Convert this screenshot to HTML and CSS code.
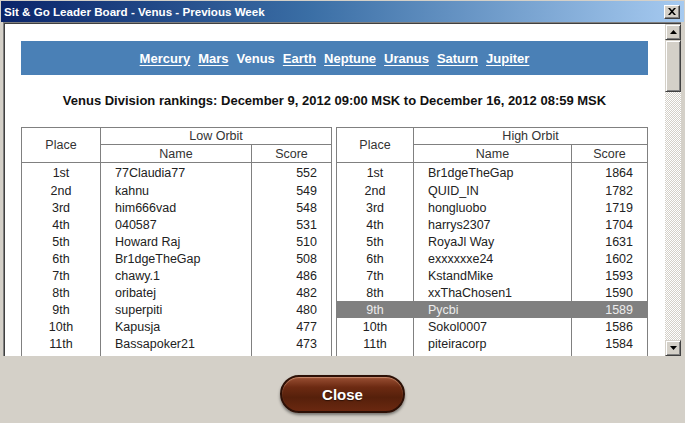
FILE: index.html
```html
<!DOCTYPE html>
<html lang="en">
<head>
  <meta charset="UTF-8">
  <title>Sit &amp; Go Leader Board - Venus - Previous Week</title>
  <link rel="stylesheet" href="styles.css">
</head>
<body>
  <div class="window">
    <div class="titlebar">
      <span class="title">Sit &amp; Go Leader Board - Venus - Previous Week</span>
      <button class="title-close">
        <svg width="8" height="7" viewBox="0 0 8 7"><path d="M0 0h2l2 2.2L6 0h2L5 3.5 8 7H6L4 4.8 2 7H0l3-3.5z" fill="#000"/></svg>
      </button>
    </div>

    <div class="frame">
      <div class="frame-inner">
        <div class="viewport">
          <div class="nav">
            <a href="#">Mercury</a>
            <a href="#">Mars</a>
            <span class="current">Venus</span>
            <a href="#">Earth</a>
            <a href="#">Neptune</a>
            <a href="#">Uranus</a>
            <a href="#">Saturn</a>
            <a href="#">Jupiter</a>
          </div>

          <h1 class="heading">Venus Division rankings: December 9, 2012 09:00 MSK to December 16, 2012 08:59 MSK</h1>

          <div class="boards">
            <table class="board board-low">
              <colgroup><col class="c-place"><col class="c-name"><col class="c-score"></colgroup>
              <thead>
                <tr class="head-top"><th rowspan="2">Place</th><th colspan="2" class="orbit">Low Orbit</th></tr>
                <tr class="head-sub"><th>Name</th><th>Score</th></tr>
              </thead>
              <tbody>
                <tr><td class="place">1st</td><td class="name">77Claudia77</td><td class="score">552</td></tr>
                <tr><td class="place">2nd</td><td class="name">kahnu</td><td class="score">549</td></tr>
                <tr><td class="place">3rd</td><td class="name">him666vad</td><td class="score">548</td></tr>
                <tr><td class="place">4th</td><td class="name">040587</td><td class="score">531</td></tr>
                <tr><td class="place">5th</td><td class="name">Howard Raj</td><td class="score">510</td></tr>
                <tr><td class="place">6th</td><td class="name">Br1dgeTheGap</td><td class="score">508</td></tr>
                <tr><td class="place">7th</td><td class="name">chawy.1</td><td class="score">486</td></tr>
                <tr><td class="place">8th</td><td class="name">oribatej</td><td class="score">482</td></tr>
                <tr><td class="place">9th</td><td class="name">superpiti</td><td class="score">480</td></tr>
                <tr><td class="place">10th</td><td class="name">Kapusja</td><td class="score">477</td></tr>
                <tr><td class="place">11th</td><td class="name">Bassapoker21</td><td class="score">473</td></tr>
                <tr><td class="place">12th</td><td class="name">Simontaj</td><td class="score">470</td></tr>
                <tr><td class="place">13th</td><td class="name">pokerlife</td><td class="score">466</td></tr>
              </tbody>
            </table>

            <table class="board board-high">
              <colgroup><col class="c-place"><col class="c-name"><col class="c-score"></colgroup>
              <thead>
                <tr class="head-top"><th rowspan="2">Place</th><th colspan="2" class="orbit">High Orbit</th></tr>
                <tr class="head-sub"><th>Name</th><th>Score</th></tr>
              </thead>
              <tbody>
                <tr><td class="place">1st</td><td class="name">Br1dgeTheGap</td><td class="score">1864</td></tr>
                <tr><td class="place">2nd</td><td class="name">QUID_IN</td><td class="score">1782</td></tr>
                <tr><td class="place">3rd</td><td class="name">hongluobo</td><td class="score">1719</td></tr>
                <tr><td class="place">4th</td><td class="name">harrys2307</td><td class="score">1704</td></tr>
                <tr><td class="place">5th</td><td class="name">RoyaJl Way</td><td class="score">1631</td></tr>
                <tr><td class="place">6th</td><td class="name">exxxxxxe24</td><td class="score">1602</td></tr>
                <tr><td class="place">7th</td><td class="name">KstandMike</td><td class="score">1593</td></tr>
                <tr><td class="place">8th</td><td class="name">xxThaChosen1</td><td class="score">1590</td></tr>
                <tr class="me"><td class="place">9th</td><td class="name">Pycbi</td><td class="score">1589</td></tr>
                <tr><td class="place">10th</td><td class="name">Sokol0007</td><td class="score">1586</td></tr>
                <tr><td class="place">11th</td><td class="name">piteiracorp</td><td class="score">1584</td></tr>
                <tr><td class="place">12th</td><td class="name">mrbill</td><td class="score">1584</td></tr>
                <tr><td class="place">13th</td><td class="name">Lukasz77</td><td class="score">1579</td></tr>
              </tbody>
            </table>
          </div>
        </div>

        <div class="scrollbar">
          <button class="sb-btn">
            <svg width="7" height="4" viewBox="0 0 7 4"><path d="M3.5 0L7 4H0z" fill="#000"/></svg>
          </button>
          <div class="sb-track">
            <div class="sb-thumb"></div>
          </div>
          <button class="sb-btn">
            <svg width="7" height="4" viewBox="0 0 7 4"><path d="M0 0h7L3.5 4z" fill="#000"/></svg>
          </button>
        </div>
      </div>
    </div>

    <div class="footer">
      <button class="close-btn">Close</button>
    </div>
  </div>
</body>
</html>
```

FILE: styles.css
```css
body {
  margin: 0;
  background-color: #d4d0c8;
  font-family: 'Liberation Sans', Arial, sans-serif;
}

.window {
  width: 685px;
  height: 423px;
  display: flex;
  flex-direction: column;
  background-color: #d4d0c8;
  overflow: hidden;
}

/* title bar */
.titlebar {
  height: 21px;
  margin: 1px 1px 0 1px;
  display: flex;
  align-items: center;
  justify-content: space-between;
  padding: 0 4px 0 3px;
  background: linear-gradient(to right, #0a246a 0%, #3a6ea5 45%, #a6caf0 100%);
}

.title {
  color: white;
  font-weight: bold;
  font-size: 11.6px;
}

.title-close {
  width: 16px;
  height: 14px;
  padding: 0;
  display: flex;
  align-items: center;
  justify-content: center;
  background-color: #d4d0c8;
  border: 1px solid;
  border-color: #ffffff #404040 #404040 #ffffff;
  box-shadow: inset -1px -1px #808080;
}

/* sunken frame */
.frame {
  height: 333px;
  margin: 0 4px 0 3px;
  border-top: 1px solid #808080;
  border-left: 1px solid #808080;
}

.frame-inner {
  height: 100%;
  display: flex;
  border-top: 1px solid #404040;
  border-left: 1px solid #404040;
  box-sizing: border-box;
}

.viewport {
  flex: 1;
  background-color: white;
  overflow: hidden;
  padding: 17px 17px 0 16px;
}

.nav {
  height: 34px;
  display: flex;
  align-items: center;
  justify-content: center;
  gap: 8px;
  background-color: #4a80b6;
  font-size: 13px;
  font-weight: bold;
  color: white;
}

.nav a {
  color: white;
  text-decoration: underline;
  text-underline-offset: 2px;
}

.heading {
  margin: 0;
  padding: 18px 0;
  line-height: 16px;
  font-size: 13px;
  font-weight: bold;
  text-align: center;
  color: #111;
}

/* leader boards */
.boards {
  display: grid;
  grid-template-columns: 311px 312px;
  gap: 4px;
}

.board {
  border-collapse: collapse;
  table-layout: fixed;
  width: 100%;
  font-size: 12.5px;
  color: #222;
  border: 1px solid #808080;
}

.board-low .c-place { width: 79px; }
.board-low .c-name { width: 151px; }
.board-low .c-score { width: 80px; }

.board-high .c-place { width: 77px; }
.board-high .c-name { width: 158px; }
.board-high .c-score { width: 76px; }

.board th {
  font-weight: normal;
  color: #333;
  padding: 0;
  border: 1px solid #808080;
}

.head-top th {
  height: 16px;
}

.head-sub th {
  height: 17px;
}

.board td {
  height: 17px;
  padding: 0;
  border-left: 1px solid #808080;
  border-right: 1px solid #808080;
  white-space: nowrap;
}

.board tbody tr:first-child td {
  height: 18px;
  padding-top: 1px;
}

.place {
  text-align: center;
}

.name {
  padding-left: 14px !important;
}

.score {
  text-align: right;
  padding-right: 14px !important;
}

.board tr.me td {
  background-color: #808080;
  color: #ececec;
  border-color: #808080;
}

/* scrollbar */
.scrollbar {
  width: 16px;
  display: flex;
  flex-direction: column;
}

.sb-btn {
  width: 16px;
  height: 16px;
  padding: 0;
  display: flex;
  align-items: center;
  justify-content: center;
  background-color: #d4d0c8;
  border: 1px solid;
  border-color: #d4d0c8 #404040 #404040 #d4d0c8;
  box-shadow: inset 1px 1px #ffffff, inset -1px -1px #808080;
}

.sb-track {
  flex: 1;
  background: repeating-conic-gradient(#ffffff 0 25%, #d4d0c8 0 50%) 0 0 / 2px 2px;
}

.sb-thumb {
  height: 52px;
  box-sizing: border-box;
  background-color: #d4d0c8;
  border: 1px solid;
  border-color: #d4d0c8 #404040 #404040 #d4d0c8;
  box-shadow: inset 1px 1px #ffffff, inset -1px -1px #808080;
}

/* footer */
.footer {
  flex: 1;
  display: flex;
  justify-content: center;
  padding-top: 19px;
}

.close-btn {
  width: 125px;
  height: 38px;
  border-radius: 19px;
  border: 2px solid #2c1006;
  background: linear-gradient(#9a5034 0%, #6c2a12 30%, #56200b 60%, #6a2810 100%);
  box-shadow: 0 2px 3px rgba(0, 0, 0, 0.45), inset 0 1px 1px rgba(255, 210, 180, 0.45);
  color: white;
  font-family: 'Liberation Sans', Arial, sans-serif;
  font-size: 15px;
  font-weight: bold;
  text-shadow: 0 1px 1px rgba(0, 0, 0, 0.5);
  cursor: pointer;
}
```
